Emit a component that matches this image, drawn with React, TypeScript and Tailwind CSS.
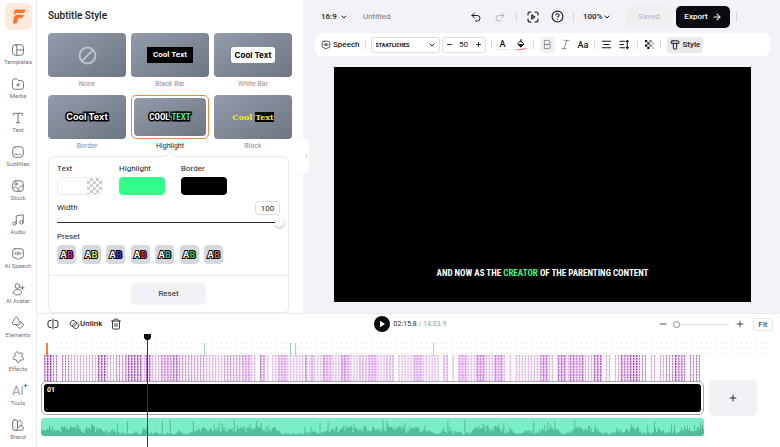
import { useState } from 'react';
import type { ReactNode } from 'react';
import { ArrowRight, Ban, ChevronDown, ChevronLeft, CircleHelp, Minus, Music, Plus, Redo2, Trash2, Type, Undo2 } from 'lucide-react';

interface IconProps {
    className?: string;
    children: ReactNode;
}

const Icon = ({ className = 'size-[14px]', children }: IconProps) => (
    <svg viewBox="0 0 24 24" fill="none" stroke="currentColor" strokeWidth={1.7} strokeLinecap="round" strokeLinejoin="round" className={className} aria-hidden="true">
        {children}
    </svg>
);

const SpeechIcon = ({ className }: { className?: string }) => (
    <Icon className={className}>
        <path d="M7 3h10a4 4 0 0 1 4 4v8a4 4 0 0 1-4 4h-2l-3 3-3-3H7a4 4 0 0 1-4-4V7a4 4 0 0 1 4-4Z" />
        <path d="M7.500 10v2M10.500 8.500v5M13.500 8.500v5M16.500 10v2" />
    </Icon>
);

const navItems: { label: string; icon: ReactNode }[] = [
    { label: 'Templates', icon: <Icon><rect x="2.500" y="3" width="19" height="18" rx="5" /><path d="M10 3v18M10 12h11.500" /></Icon> },
    { label: 'Media', icon: <Icon><path d="M2.500 7a4 4 0 0 1 4-4h2.500c1 0 1.800.5 2.300 1.300L12.500 6H17a4.500 4.500 0 0 1 4.500 4.500V17a4 4 0 0 1-4 4h-11a4 4 0 0 1-4-4Z" /><path d="M12 11v5M9.500 13.500h5" /></Icon> },
    { label: 'Text', icon: <Type size={14} strokeWidth={1.7} /> },
    { label: 'Subtitles', icon: <Icon><rect x="3" y="3" width="18" height="18" rx="5" /><path d="M7 16h5M15 16h2" /></Icon> },
    { label: 'Stock', icon: <Icon><rect x="3" y="3" width="18" height="18" rx="5" /><circle cx="8.500" cy="8.500" r="2" /><path d="M3 17c4-5 6-3 8-1s4-6 10-4" /><path d="M11 16l4 5" /></Icon> },
    { label: 'Audio', icon: <Music size={14} strokeWidth={1.7} /> },
    { label: 'AI Speech', icon: <SpeechIcon className="size-[14px]" /> },
    { label: 'AI Avatar', icon: <Icon><circle cx="11" cy="7" r="4" /><path d="M4 18c0-3 3-5 7-5s7 2 7 5-3 4-7 4-7-1-7-4Z" /><path d="M19.500 7v6M16.500 10h6" /></Icon> },
    { label: 'Elements', icon: <Icon><path d="M7 3.500a2.500 2.500 0 0 1 4.500 0l4 7.500c1 2-.2 3.500-2 3.500H4.500c-2 0-3-1.800-2-3.500Z" /><path d="M16.500 9.500l4.300 4.300a2 2 0 0 1 0 2.800l-4 4a2 2 0 0 1-2.800 0l-6-6" /></Icon> },
    { label: 'Effects', icon: <Icon><path d="M9 3.500c.8-1 2-.8 2.700.2L13.500 6l4.500-1c1.500-.2 2.500 1 2 2.300L18.500 11l2.700 3.500c.8 1.300 0 2.700-1.400 2.700l-4 .1-2 3.800c-.8 1.200-2.400 1-3-.3l-1.300-3.600-4.800-1c-1.400-.5-1.700-2-.7-3l3-2.700-.4-3.500Z" /></Icon> },
    {
        label: 'Tools',
        icon: (
            <span className="relative text-[13px] leading-[14px] font-light">
                AI
                <svg viewBox="0 0 8 8" className="absolute -top-px -right-1 size-[5px]" fill="currentColor" aria-hidden="true">
                    <path d="M4 0l1 3 3 1-3 1-1 3-1-3-3-1 3-1Z" />
                </svg>
            </span>
        ),
    },
    { label: 'Brand', icon: <Icon><rect x="3" y="3" width="8" height="18" rx="3" /><path d="M11 7l2-2a2.500 2.500 0 0 1 3.700.3l2 2.400a2.500 2.500 0 0 1-.3 3.500L11 17.500" /><path d="M16 13.500h2.500A2.500 2.500 0 0 1 21 16v2.500a2.500 2.500 0 0 1-2.500 2.500H7.500" /><path d="M7 17h.1" /></Icon> },
];

const CONDENSED = "font-['Liberation_Sans_Narrow','Roboto_Condensed',sans-serif]";

const styles: { name: string; sample: ReactNode }[] = [
    { name: 'None', sample: <Ban size={19} strokeWidth={2.5} className="-scale-x-100 text-[#bfc4cd]" /> },
    { name: 'Black Bar', sample: <span className="bg-black px-[6px] py-[2px] text-[8px] leading-3 font-bold text-white">Cool Text</span> },
    { name: 'White Bar', sample: <span className="rounded-[3px] bg-white px-[4px] py-[2px] font-['Inter',sans-serif] text-[8px] leading-3 font-bold text-black">Cool Text</span> },
    { name: 'Border', sample: <span className="font-['Inter',sans-serif] text-[9px] leading-3 font-bold text-white [-webkit-text-stroke:3px_black] [paint-order:stroke_fill]">Cool Text</span> },
    {
        name: 'Highlight',
        sample: (
            <span className="font-['Liberation_Sans_Narrow','Roboto_Condensed',sans-serif] text-[9px] leading-3 font-bold text-white [-webkit-text-stroke:3px_black] [paint-order:stroke_fill]">
                COOL <span className="text-[#33f58f]">TEXT</span>
            </span>
        ),
    },
    {
        name: 'Block',
        sample: (
            <span className="font-['DejaVu_Serif',serif] text-[8px] leading-[10px] font-bold text-[#f2ee1c]">
                Cool <span className="inline-block bg-black">Text</span>
            </span>
        ),
    },
];

const presetColors = ['#c32fb4', '#dbe021', '#4a3ac9', '#e0282c', '#20b8cf', '#3fc63c', '#dc6a2c'];

// Small seeded generator so the tracks look the same on every render
const makeRandom = (seed: number) => {
    let s = seed;
    return () => {
        s = (s * 1103515245 + 12345) % 2147483648;
        return s / 2147483648;
    };
};

const SubtitleTrack = () => {
    const rand = makeRandom(27);
    const marks: { x: number; color: string }[] = [];
    let density = 0.4;
    for (let x = 0; x < 657; x += 1) {
        if (x % 9 === 0) density = rand();
        const r = rand();
        if (x % 3 === 0 && r < 0.94) {
            marks.push({ x, color: density > 0.7 && r < 0.5 ? '#9a1fc0' : density > 0.3 ? '#c65cec' : '#d98bf5' });
        } else if (x % 3 === 1 && density > 0.6) {
            marks.push({ x, color: '#dc92f7' });
        }
    }
    return (
        <svg viewBox="0 0 657 26" preserveAspectRatio="none" className="block h-[26px] w-full" aria-hidden="true">
            {marks.map((m) => (
                <line key={m.x} x1={m.x + 0.5} x2={m.x + 0.5} y1="0" y2="26" stroke={m.color} strokeWidth="1" strokeDasharray="2 0.7" />
            ))}
        </svg>
    );
};

const Waveform = () => {
    const rand = makeRandom(91);
    let d = '';
    let level = 5;
    for (let x = 0; x < 664; x += 1) {
        level = Math.max(2, Math.min(9, level + (rand() - 0.5) * 3));
        const h = rand() > 0.93 ? 9 + rand() * 7 : level * (0.5 + rand() * 0.8);
        d += `M${x} 18v-${h.toFixed(1)}h1V18Z`;
    }
    return (
        <svg viewBox="0 0 664 18" preserveAspectRatio="none" className="block h-[18px] w-full rounded-[3px] bg-[#7beec5]" aria-hidden="true">
            <path d={d} fill="#52bd97" />
        </svg>
    );
};

const Divider = ({ className = 'h-2' }: { className?: string }) => <span className={`w-px shrink-0 bg-[#d5d5dc] ${className}`} />;

const Sidebar = () => (
    <aside className="flex w-[37px] shrink-0 flex-col items-center border-r border-[#ececf0] bg-white pt-[3px] pb-[5px]">
        <a href="#home" aria-label="Home" className="flex h-[27px] w-[27px] items-center justify-center rounded-[6px] bg-[#fee9dc]">
            <svg viewBox="0 0 24 24" className="size-[17px]" fill="#fb7228" aria-hidden="true">
                <path d="M8.500 2H22l-1.200 3.200A2.500 2.500 0 0 1 18.500 7H9.800l-4.500 2.200L6 5c.3-1.800 1-3 2.500-3Z" />
                <path d="M10 9.500h9.500l-1.200 3.200a2.500 2.500 0 0 1-2.300 1.600h-4.800l-1 5c-.3 1.800-1.500 2.700-3.200 2.700H4l2-9.500c.5-2 2-3 4-3Z" />
            </svg>
        </a>
        <nav className="mt-[13px] flex flex-1 flex-col justify-between gap-2">
            {navItems.map((item) => (
                <a key={item.label} href={`#${item.label}`} className="flex flex-col items-center text-[#70717c]">
                    <span className="flex h-[14px] items-center">{item.icon}</span>
                    <span className="text-[6px] leading-[10px] whitespace-nowrap">{item.label}</span>
                </a>
            ))}
        </nav>
    </aside>
);

const StylePanel = () => {
    const [selected, setSelected] = useState('Highlight');
    const [width, setWidth] = useState(100);

    return (
        <section className="w-[266px] shrink-0 bg-white px-[11px] pt-[10px]">
            <h1 className="text-[10px] leading-3 font-medium text-[#1a1b22]">Subtitle Style</h1>

            <div className="mt-[11px] grid w-[244px] grid-cols-3 gap-x-[5px] gap-y-1">
                {styles.map((s) => (
                    <button key={s.name} type="button" aria-pressed={selected === s.name} onClick={() => setSelected(s.name)} className="group flex flex-col text-[#8c8d96] aria-pressed:text-[#1a1b22]">
                        <span className="flex h-11 w-full rounded-[5px] border border-transparent group-aria-pressed:border-[#ee8741] group-aria-pressed:p-[2px]">
                            <span className="-m-px flex flex-1 items-center justify-center rounded-[4px] bg-linear-to-br from-[#949cab] to-[#6e7583] whitespace-nowrap group-aria-pressed:m-0">{s.sample}</span>
                        </span>
                        <span className="w-full pt-px text-center text-[7px] leading-[13px]">{s.name}</span>
                    </button>
                ))}
            </div>

            <div className="relative mt-[3px] w-[241px] rounded-[6px] border border-[#ececf0] bg-white shadow-xs">
                <span className="absolute -top-[5px] left-[118px] size-2 rotate-45 border-t border-l border-[#ececf0] bg-white" />
                <div className="px-2 pt-[7px]">
                    <div className="flex gap-4 text-[8px] leading-[10px] text-[#25262d]">
                        <div className="w-[46px]">
                            <span id="text-color">Text</span>
                            <button type="button" aria-labelledby="text-color" className="mt-[3px] flex h-[18px] w-full overflow-hidden rounded-[4px] border border-[#ececf0]">
                                <span className="flex-1" />
                                <span className="h-full w-[15px] bg-[repeating-conic-gradient(#cfcfd2_0_25%,#ffffff_0_50%)] bg-size-[6px_6px]" />
                            </button>
                        </div>
                        <div className="w-[46px]">
                            <span id="highlight-color">Highlight</span>
                            <button type="button" aria-labelledby="highlight-color" className="mt-[3px] block h-[18px] w-full rounded-[4px] bg-[#34ff8d]" />
                        </div>
                        <div className="w-[46px]">
                            <span id="border-color">Border</span>
                            <button type="button" aria-labelledby="border-color" className="mt-[3px] block h-[18px] w-full rounded-[4px] bg-black" />
                        </div>
                    </div>
                    <div className="mt-[6px] flex items-center justify-between text-[8px] leading-3 text-[#25262d]">
                        <label htmlFor="border-width">Width</label>
                        <input
                            id="border-width"
                            value={width}
                            onChange={(e) => setWidth(Number(e.target.value) || 0)}
                            className="h-[14px] w-[25px] rounded-[3px] border border-[#dcdce2] text-center text-[8px] leading-3"
                        />
                    </div>
                    <input
                        type="range"
                        aria-label="Border width"
                        min={0}
                        max={100}
                        value={width}
                        onChange={(e) => setWidth(Number(e.target.value))}
                        className="-mr-1 mt-[2px] block h-[10px] w-[227px] appearance-none bg-transparent [&::-webkit-slider-runnable-track]:h-px [&::-webkit-slider-runnable-track]:bg-[#2b2c33] [&::-webkit-slider-thumb]:-mt-1 [&::-webkit-slider-thumb]:size-[9px] [&::-webkit-slider-thumb]:appearance-none [&::-webkit-slider-thumb]:rounded-full [&::-webkit-slider-thumb]:bg-white [&::-webkit-slider-thumb]:shadow-[0_1px_3px_#0005]"
                    />
                    <h2 className="mt-[5px] text-[8px] leading-[10px] text-[#25262d]">Preset</h2>
                    <div className="mt-[3px] flex w-[166px] justify-between">
                        {presetColors.map((color) => (
                            <button
                                key={color}
                                type="button"
                                className="flex h-[19px] w-[19px] items-center justify-center rounded-[4px] bg-[#d5d8dd] font-['Inter',sans-serif] text-[9px] leading-3 font-bold text-white [-webkit-text-stroke:2px_black] [paint-order:stroke_fill]"
                            >
                                A<span style={{ color }}>B</span>
                            </button>
                        ))}
                    </div>
                </div>
                <div className="mt-[11px] flex justify-center border-t border-[#ececf0] py-[7px]">
                    <button type="button" className="h-[22px] w-[75px] rounded-[5px] bg-[#f2f2f6] text-[8px] text-[#25262d]">Reset</button>
                </div>
            </div>
        </section>
    );
};

const TopBar = () => (
    <header className="flex h-[33px] items-center pr-[43px] pl-[18px] text-[8px] leading-3 text-[#16171d]">
        <div className="relative flex items-center">
            <select aria-label="Aspect ratio" className="h-4 w-[27px] appearance-none leading-4 font-medium"><option>16:9</option></select>
            <ChevronDown size={8} strokeWidth={3} className="pointer-events-none absolute right-0" />
        </div>
        <input aria-label="Project name" defaultValue="Untitled" className="ml-[15px] w-20 min-w-0 text-[#777882]" />
        <div className="ml-auto flex items-center">
            <button type="button" aria-label="Undo"><Undo2 size={12} strokeWidth={2} /></button>
            <button type="button" aria-label="Redo" className="ml-3 text-[#b5b5bd]"><Redo2 size={12} strokeWidth={2} /></button>
            <Divider className="mx-[10px] h-[10px]" />
            <button type="button" aria-label="Preview">
                <Icon className="size-3">
                    <path strokeWidth={2.2} d="M2 8V6a4 4 0 0 1 4-4h2M16 2h2a4 4 0 0 1 4 4v2M22 16v2a4 4 0 0 1-4 4h-2M8 22H6a4 4 0 0 1-4-4v-2" />
                    <path strokeWidth={2.2} d="M9.500 8l6 4-6 4Z" />
                </Icon>
            </button>
            <button type="button" aria-label="Help" className="ml-3"><CircleHelp size={13} strokeWidth={2} /></button>
            <Divider className="mx-[9px] h-[10px]" />
            <div className="relative flex items-center">
                <select aria-label="Zoom" className="h-4 w-[28px] appearance-none leading-4 font-medium"><option>100%</option></select>
                <ChevronDown size={8} strokeWidth={3} className="pointer-events-none absolute right-0" />
            </div>
            <button type="button" disabled className="ml-[15px] h-[22px] w-[46px] rounded-[5px] bg-[#efeff2] text-[#b3b3ba]">Saved</button>
            <button type="button" className="ml-1 flex h-[22px] w-[54px] items-center justify-center gap-1 rounded-[5px] bg-[#0a0b10] font-medium text-white">
                Export <ArrowRight size={10} strokeWidth={2.5} />
            </button>
            <Divider className="ml-[6px] h-[10px]" />
        </div>
    </header>
);

const FormatBar = () => (
    <div className="mr-[10px] ml-3 flex h-[23px] items-center rounded-[6px] bg-white pl-[6px] text-[8px] leading-3 text-[#16171d]">
        <button type="button" className="flex items-center gap-[2px] font-medium">
            <SpeechIcon className="size-[10px]" /> Speech
        </button>
        <Divider className="mx-[5px] h-2" />
        <div className="relative flex items-center">
            <select aria-label="Font" className={`h-4 w-[69px] appearance-none rounded-[3px] border border-[#dcdce2] pl-1 text-[6px] leading-[14px] font-bold ${CONDENSED}`}><option>STAATLICHES</option></select>
            <ChevronDown size={8} strokeWidth={3} className="pointer-events-none absolute right-1" />
        </div>
        <div className="ml-[2px] flex h-4 w-[44px] items-center justify-between rounded-[3px] border border-[#dcdce2] px-[3px]">
            <button type="button" aria-label="Smaller"><Minus size={7} strokeWidth={3} /></button>
            <input aria-label="Font size" defaultValue="50" className="w-4 text-center" />
            <button type="button" aria-label="Larger"><Plus size={7} strokeWidth={3} /></button>
        </div>
        <Divider className="mx-[5px] h-2" />
        <button type="button" aria-label="Text color" className="flex w-3 flex-col items-center border-b border-[#e8e8ec] text-[9px] leading-[10px] font-medium">A</button>
        <button type="button" aria-label="Fill color" className="ml-[6px]">
            <Icon className="size-3">
                <path strokeWidth={2} d="M12 1v5M12 4l6 6-6 6-6-6Z" />
                <path fill="currentColor" d="M7 11h10l-5 5Z" />
                <path stroke="#ef7186" strokeWidth={2.4} d="M2 22c7-.5 13-1.500 20-3" />
            </Icon>
        </button>
        <Divider className="mx-[6px] h-2" />
        <button type="button" aria-label="Bold" className="flex h-4 w-[15px] items-center justify-center rounded-[3px] bg-[#f1f1f4] text-[#777882]">
            <Icon className="size-[11px]"><path d="M6 3h7a4.500 4.500 0 0 1 0 9H6ZM6 12h8a4.500 4.500 0 0 1 0 9H6Z" /></Icon>
        </button>
        <button type="button" aria-label="Italic" className="ml-[5px] text-[#777882]">
            <Icon className="size-[11px]"><path d="M10 3h10M4 21h10M15 3L9 21" /></Icon>
        </button>
        <button type="button" className="ml-[7px] text-[9px] font-medium">Aa</button>
        <Divider className="mx-[6px] h-2" />
        <button type="button" aria-label="Align">
            <Icon className="size-[11px]"><path strokeWidth={2.4} d="M3 5h18M6 12h12M3 19h18" /></Icon>
        </button>
        <button type="button" aria-label="Line spacing" className="ml-[7px]">
            <Icon className="size-[11px]"><path strokeWidth={2.4} d="M2 5h10M2 12h8M2 19h10M18 3v18M15.500 5.500L18 3l2.500 2.500M15.500 18.500L18 21l2.500-2.500" /></Icon>
        </button>
        <Divider className="mx-[7px] h-2" />
        <button type="button" aria-label="Opacity">
            <svg viewBox="0 0 8 8" className="size-[9px]" aria-hidden="true">
                <path d="M0 0h2v2H0ZM0 4h2v2H0ZM2 2h2v2H2ZM2 6h2v2H2Z" fill="#16171d" />
                <path d="M4 0h2v2H4ZM4 4h2v2H4Z" fill="#777882" />
                <path d="M6 2h2v2H6ZM6 6h2v2H6Z" fill="#c4c4ca" />
            </svg>
        </button>
        <Divider className="mx-[6px] h-2" />
        <button type="button" className="flex h-4 w-9 items-center justify-center gap-[2px] rounded-[3px] bg-[#e9e9ee] font-medium">
            <Icon className="size-[10px]"><path strokeWidth={2.4} d="M5 2h14a2 2 0 0 1 2 2v4h-5v11a3 3 0 0 1-3 3h-2a3 3 0 0 1-3-3V8H3V4a2 2 0 0 1 2-2ZM8 8h3M13 8h3" /></Icon>
            Style
        </button>
    </div>
);

const Stage = () => (
    <main className="relative flex min-w-0 flex-1 flex-col bg-[#f2f2f7]">
        <button type="button" aria-label="Collapse panel" className="absolute top-[139px] left-0 flex h-[34px] w-[6px] items-center justify-center rounded-r-[4px] bg-white text-[#9a9ba3]">
            <ChevronLeft size={7} className="shrink-0" />
        </button>
        <TopBar />
        <FormatBar />
        <div className="mt-[11px] mr-[29px] mb-[11px] ml-[31px] flex aspect-video flex-col items-center justify-end bg-black">
            <p className={`pb-[23px] text-[9px] leading-3 font-bold whitespace-nowrap text-white ${CONDENSED}`}>
                AND NOW AS THE <span className="text-[#33f58f]">CREATOR</span> OF THE PARENTING CONTENT
            </p>
        </div>
    </main>
);

const Timeline = () => (
    <section className="relative flex flex-1 flex-col border-t border-[#e9e9ee] bg-white text-[8px] leading-3 text-[#25262d]">
        <div className="grid h-5 grid-cols-[1fr_auto_1fr] items-center pr-[7px] pl-[10px]">
            <div className="flex items-center">
                <button type="button" aria-label="Split">
                    <Icon className="size-3"><path strokeWidth={2} d="M12 2v20M8 5H6a4 4 0 0 0-4 4v6a4 4 0 0 0 4 4h2M16 5h2a4 4 0 0 1 4 4v6a4 4 0 0 1-4 4h-2" /></Icon>
                </button>
                <button type="button" className="ml-[10px] flex items-center font-medium">
                    <Icon className="size-[11px]">
                        <path strokeWidth={2} d="M8 16a6 6 0 0 1-4-10 6 6 0 0 1 8-2c3 1.500 4.500 5 3 8-.6 1.300-1.500 2.200-3 3" />
                        <path strokeWidth={2} d="M16 8a6 6 0 0 1 4 10 6 6 0 0 1-8 2c-3-1.500-4.500-5-3-8 .6-1.300 1.500-2.200 3-3" />
                    </Icon>
                    Unlink
                </button>
                <button type="button" aria-label="Delete" className="ml-2"><Trash2 size={12} strokeWidth={1.8} /></button>
            </div>
            <div className="flex items-center">
                <button type="button" aria-label="Play" className="flex size-4 items-center justify-center rounded-full bg-[#0a0b10]">
                    <svg viewBox="0 0 8 8" className="size-2" fill="#ffffff" aria-hidden="true"><path d="M2 .8l5 3.200-5 3.200Z" /></svg>
                </button>
                <span className="ml-1 text-[7px]">02:15.8 <span className="text-[#9a9ba3]">/ 14:03.9</span></span>
            </div>
            <div className="flex items-center justify-end">
                <button type="button" aria-label="Zoom out"><Minus size={10} strokeWidth={2} /></button>
                <input
                    type="range"
                    aria-label="Timeline zoom"
                    defaultValue={0}
                    className="ml-[5px] h-2 w-[56px] appearance-none bg-transparent [&::-webkit-slider-runnable-track]:h-px [&::-webkit-slider-runnable-track]:bg-[#dcdce2] [&::-webkit-slider-thumb]:-mt-[3px] [&::-webkit-slider-thumb]:size-[7px] [&::-webkit-slider-thumb]:appearance-none [&::-webkit-slider-thumb]:rounded-full [&::-webkit-slider-thumb]:border [&::-webkit-slider-thumb]:border-[#8c8d96] [&::-webkit-slider-thumb]:bg-white"
                />
                <button type="button" aria-label="Zoom in" className="ml-[6px]"><Plus size={10} strokeWidth={2} /></button>
                <button type="button" className="ml-2 h-[13px] w-[20px] rounded-[3px] border border-[#e5e5ea]">Fit</button>
            </div>
        </div>

        <div className="mt-[7px] pr-[78px] pl-[7px]">
            <div className="-mr-[67px] ml-[10px] h-[14px] bg-[radial-gradient(circle,#dcdce1_0.5px,transparent_1px)] bg-size-[5px_5px]" />
            <SubtitleTrack />
        </div>
        <div className="flex items-center gap-[5px] pr-[23px] pl-1">
            <button type="button" className="h-[34px] min-w-0 flex-1 rounded-[5px] border border-[#a9a9ae] bg-white p-[2px]">
                <span className="flex h-full rounded-[3px] bg-black px-[3px] py-px text-[7px] leading-[10px] font-bold text-white">01</span>
            </button>
            <button type="button" aria-label="Add scene" className="-my-1 flex h-9 w-12 items-center justify-center rounded-[5px] bg-[#f2f2f6]">
                <Plus size={10} strokeWidth={2.5} />
            </button>
        </div>
        <div className="pt-[3px] pr-[76px] pb-[10px] pl-1"><Waveform /></div>

        {/* Markers and playhead */}
        <span className="absolute top-[29px] left-[9px] h-[13px] w-[2px] bg-[#f57f35]" />
        {['left-[167px]', 'left-[253px]', 'left-[258px]', 'left-[396px]'].map((left) => (
            <span key={left} className={`absolute top-[29px] h-[13px] w-px bg-[#a9c8f2] ${left}`} />
        ))}
        <span className="absolute top-[24px] bottom-0 left-[110px] w-px bg-[#3a3b40]" />
        <svg viewBox="0 0 7 6" className="absolute top-[20px] left-[107px] h-[6px] w-[7px]" fill="#0a0b10" aria-hidden="true">
            <path d="M0 0h7v4L5 6H2L0 4Z" />
        </svg>
    </section>
);

export default function App() {
    return (
        <div className="flex min-h-screen bg-white font-['Roboto',sans-serif]">
            <Sidebar />
            <div className="flex min-w-0 flex-1 flex-col">
                <div className="flex">
                    <StylePanel />
                    <Stage />
                </div>
                <Timeline />
            </div>
        </div>
    );
}
